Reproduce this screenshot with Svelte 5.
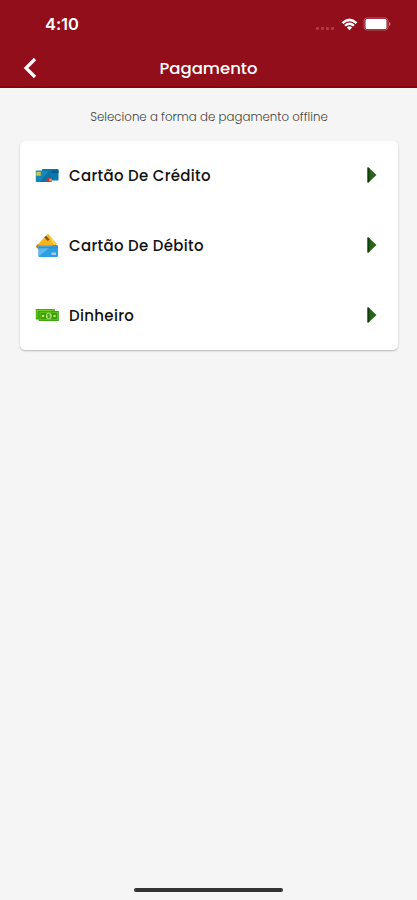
<script lang="ts">
interface Method {
    id: string;
    label: string;
}

let methods: Method[] = [
    { id: "credit", label: "Cartão De Crédito" },
    { id: "debit", label: "Cartão De Débito" },
    { id: "cash", label: "Dinheiro" }
];

let selected: string | null = null;

function choose(id: string): void {
    selected = id;
}
</script>

<svelte:head>
    <title>Pagamento</title>
</svelte:head>

<div class="screen">
    <header>
        <div class="status">
            <span class="time">4:10</span>
            <div class="indicators">
                <div class="signal"><i></i><i></i><i></i><i></i></div>
                <svg class="wifi" width="17" height="13" viewBox="0 0 17 13">
                    <path d="M.6 4.2Q8.500 -3 16.400 4.200L14.700 6Q8.500 .6 2.300 6Z" fill="#fff" />
                    <path d="M3.200 6.900Q8.500 2.200 13.800 6.900L12.100 8.600Q8.500 5.500 4.900 8.600Z" fill="#fff" />
                    <path d="M5.800 9.500Q8.500 7.200 11.200 9.500L8.500 12.300Z" fill="#fff" />
                </svg>
                <svg class="battery" width="28" height="14" viewBox="0 0 28 14">
                    <rect x="1" y="1" width="24" height="12" rx="3" fill="none" stroke="#b55a65" />
                    <rect x="2.500" y="2" width="21" height="10" rx="1.500" fill="#fff" />
                    <path d="M26 5v4q1.400-.6 1.400-2t-1.400-2" fill="#c9808a" />
                </svg>
            </div>
        </div>
        <div class="nav">
            <button class="back" aria-label="Voltar">
                <svg width="14" height="22" viewBox="0 0 14 22">
                    <path d="M12 2L3 11L12 20" fill="none" stroke="#fff" stroke-width="3.200" />
                </svg>
            </button>
            <h1>Pagamento</h1>
        </div>
    </header>

    <main>
        <p>Selecione a forma de pagamento offline</p>
        <div class="card">
            {#each methods as method}
                <button class="row" class:selected={selected === method.id} on:click={() => choose(method.id)}>
                    <svg class="icon" width="24" height="24" viewBox="0 0 24 24">
                        {#if method.id === "credit"}
                            <rect x="7" y="6" width="16.500" height="11.500" rx=".8" fill="#0878ae" />
                            <rect x="7" y="7.500" width="16.500" height="2.500" fill="#075987" />
                            <rect x=".8" y="7.500" width="15.700" height="11.500" rx=".8" fill="#1688b8" />
                            <path d="M5 19L14 7.500h2.500V19Z" fill="#0874a5" />
                            <rect x="1.300" y="8.800" width="4.500" height="4" rx=".6" fill="#c9c552" />
                            <circle cx="13.300" cy="17" r="1.900" fill="#dc2638" />
                            <circle cx="15.500" cy="17" r="1.400" fill="#ed9d38" />
                        {:else if method.id === "debit"}
                            <path d="M.8 13.500L13 .8L22 11L9 22Z" fill="#f6b51f" />
                            <path d="M14.500 4L16 4.500L21 10.500L19 12Z" fill="#ffd54b" />
                            <path d="M9.200 4.300L11 2.700L14.500 6.500L12.800 8Z" fill="#80531f" />
                            <path d="M.8 13.500L3 11.200L7 15.500L5 18Z" fill="#c77a1c" />
                            <rect x="3.500" y="12" width="19.500" height="12" rx="1" fill="#2c9fe2" />
                            <path d="M3.500 23.500L18 12h-13.500q-1 0-1 1Z" fill="#5fb9ef" />
                            <rect x="3.500" y="13.500" width="19.500" height="1.800" fill="#3a8cc4" />
                            <rect x="16.500" y="19.500" width="4.500" height="2.500" fill="#a8cbe3" />
                        {:else}
                            <rect x=".8" y="6" width="19" height="10.500" fill="#43a90d" />
                            <path d="M2 7.500h16.500M2 7.500v7" fill="none" stroke="#75cf27" />
                            <rect x="3.800" y="8" width="20" height="10" fill="#36a008" />
                            <rect x="5" y="9.200" width="17.600" height="7.600" fill="none" stroke="#72cc24" stroke-width=".8" />
                            <ellipse cx="13.800" cy="13" rx="3" ry="3.200" fill="#a6df69" />
                            <path d="M14.900 11.500h-1.700q-.8 0-.8.700t.8.700h1.100q.8 0 .8.800t-.8.800h-1.800M13.700 10.700v4.600" fill="none" stroke="#247c13" stroke-width=".6" />
                            <circle cx="8" cy="13" r="1.300" fill="#c2e55b" />
                            <circle cx="19.600" cy="13" r="1.300" fill="#c2e55b" />
                        {/if}
                    </svg>
                    <span class="label">{method.label}</span>
                    <svg class="arrow" width="10" height="16" viewBox="0 0 10 16">
                        <path d="M.5 .5H1.500L9.500 8L1.500 15.500H.5Z" fill="#28651a" />
                        <path d="M.5 .5H1.500L2.500 1.500V14.500L1.500 15.500H.5Z" fill="#123e0b" />
                    </svg>
                </button>
            {/each}
        </div>
    </main>

    <div class="home"></div>
</div>

<style>
    :global(body) {
        margin: 0;
        background: #f5f5f5;
    }

    .screen {
        box-sizing: border-box;
        height: 900px;
        display: flex;
        flex-direction: column;
        background: #f5f5f5;
        font-family: Poppins, Inter, sans-serif;
    }

    header {
        box-sizing: border-box;
        height: 88px;
        background: #920e1b;
        border-bottom: 2px solid #850009;
        color: #fff;
    }

    .status {
        box-sizing: border-box;
        height: 48px;
        padding: 0 26px 0 45px;
        display: flex;
        align-items: center;
        justify-content: space-between;
    }

    .time {
        font-family: Inter, sans-serif;
        font-size: 16.500px;
        font-weight: 600;
        letter-spacing: -0.1px;
    }

    .indicators {
        display: flex;
        align-items: center;
    }

    .signal {
        display: flex;
        gap: 2px;
        margin: 8px 7px 0 0;
    }

    .signal i {
        width: 3px;
        height: 3px;
        border-radius: 1px;
        background: #ae3c48;
    }

    .wifi {
        margin-right: 5px;
    }

    .nav {
        height: 39px;
        display: grid;
        grid-template-columns: 60px 1fr 60px;
        align-items: center;
    }

    button {
        border: 0;
        padding: 0;
        background: none;
        font-family: inherit;
        cursor: pointer;
    }

    .back {
        display: flex;
        padding-left: 23px;
    }

    h1 {
        margin: 0;
        padding-top: 1px;
        text-align: center;
        font-size: 16.500px;
        font-weight: 500;
    }

    main {
        flex: 1;
        padding: 0 19px 0 20px;
    }

    p {
        margin: 0;
        height: 53px;
        line-height: 58px;
        text-align: center;
        font-size: 11.800px;
        font-weight: 300;
        color: #444;
    }

    .card {
        height: 209px;
        background: #fff;
        border-radius: 5px;
        box-shadow: 0 1px 2px rgba(0, 0, 0, 0.25);
    }

    .row {
        width: 100%;
        height: 70px;
        padding: 0 21px 2px 15px;
        display: flex;
        align-items: center;
        color: #111;
    }

    .label {
        flex: 1;
        margin-left: 10px;
        text-align: left;
        font-size: 15px;
        font-weight: 500;
        letter-spacing: 0.32px;
    }

    .home {
        width: 149px;
        height: 4px;
        margin: 0 auto 8px;
        border-radius: 2px;
        background: #333;
    }
</style>
